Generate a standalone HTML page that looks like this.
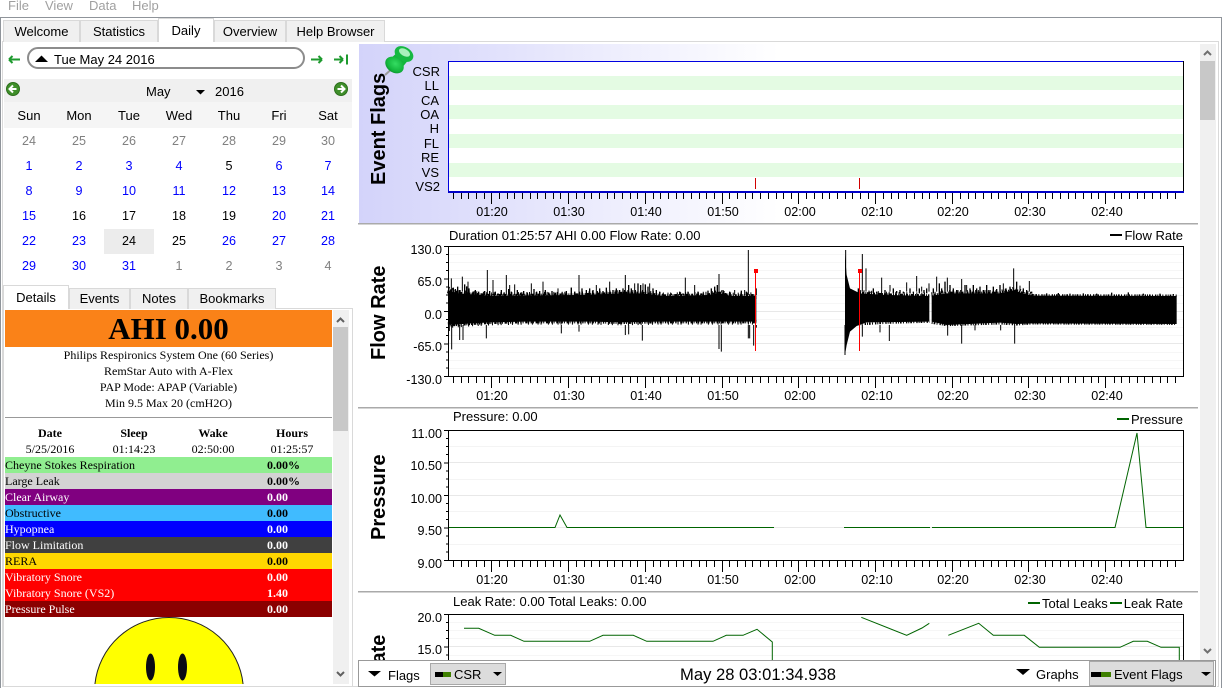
<!DOCTYPE html>
<html><head><meta charset="utf-8">
<style>
html,body{margin:0;padding:0;background:#fff;width:1224px;height:688px;overflow:hidden}
body{position:relative;font:13px "Liberation Sans",Arial,sans-serif;color:#000}
.a{position:absolute;white-space:nowrap}
.tab{position:absolute;box-sizing:border-box;background:#f0f0f0;border:1px solid #d9d9d9;border-bottom:0;text-align:center;color:#000}
.on{background:#fff}
.d{position:absolute;width:50px;text-align:center;height:15px;line-height:15px;color:#00f;font-size:12.6px}
.w{font-size:13px}
.g{color:#808080}.k{color:#000}
.r{position:absolute;left:5px;width:327px;height:16px;font:12px/16px "Liberation Serif",serif;white-space:nowrap}
.r b{position:absolute;left:262px;top:0}
.c{position:absolute;left:5px;width:327px;text-align:center;font:12px/16px "Liberation Serif",serif}
.h{position:absolute;width:80px;text-align:center;font:12px/16px "Liberation Serif",serif}
svg{font:13px "Liberation Sans",Arial,sans-serif}
</style></head><body>

<!-- menu -->
<div class="a" style="left:8px;top:-2px;color:#a0a0a0;line-height:16px">File</div>
<div class="a" style="left:45px;top:-2px;color:#a0a0a0;line-height:16px">View</div>
<div class="a" style="left:89px;top:-2px;color:#a0a0a0;line-height:16px">Data</div>
<div class="a" style="left:132px;top:-2px;color:#a0a0a0;line-height:16px">Help</div>
<div class="a" style="left:0;top:17px;width:1222px;height:1px;background:#8f949a"></div>
<div class="a" style="left:0;top:17px;width:1px;height:671px;background:#8f949a"></div>
<div class="a" style="left:1221px;top:17px;width:1px;height:671px;background:#8f949a"></div>

<!-- main tabs -->
<div class="a" style="left:2px;top:41px;width:1215px;height:644px;border:1px solid #d9d9d9"></div>
<div class="tab" style="left:3px;top:20px;width:77px;height:22px;line-height:22px">Welcome</div>
<div class="tab" style="left:80px;top:20px;width:78px;height:22px;line-height:22px">Statistics</div>
<div class="tab" style="left:214px;top:20px;width:72px;height:22px;line-height:22px">Overview</div>
<div class="tab" style="left:286px;top:20px;width:99px;height:22px;line-height:22px">Help Browser</div>
<div class="tab on" style="left:158px;top:18px;width:56px;height:24px;line-height:23px">Daily</div>

<!-- date bar -->
<div class="a" style="left:27px;top:47px;width:274px;height:18px;border:2px solid #8c8c8c;border-radius:11px"></div>
<div class="a" style="left:54px;top:52px;line-height:15px">Tue May 24 2016</div>

<!-- calendar -->
<div class="a" style="left:4px;top:79px;width:348px;height:23px;background:#f0f0f0"></div>
<div class="a" style="left:4px;top:102px;width:348px;height:26px;background:#f5f5f5"></div>
<div class="a" style="left:146px;top:84px;line-height:15px">May</div>
<div class="a" style="left:215px;top:84px;line-height:15px">2016</div>
<div class="d k w" style="left:4px;top:108px">Sun</div><div class="d k w" style="left:54px;top:108px">Mon</div><div class="d k w" style="left:104px;top:108px">Tue</div><div class="d k w" style="left:154px;top:108px">Wed</div><div class="d k w" style="left:204px;top:108px">Thu</div><div class="d k w" style="left:254px;top:108px">Fri</div><div class="d k w" style="left:303px;top:108px">Sat</div>
<div class="a" style="left:104px;top:229px;width:50px;height:25px;background:#ececec"></div>

<div class="d g" style="left:4px;top:134px">24</div><div class="d g" style="left:54px;top:134px">25</div><div class="d g" style="left:104px;top:134px">26</div><div class="d g" style="left:154px;top:134px">27</div><div class="d g" style="left:204px;top:134px">28</div><div class="d g" style="left:254px;top:134px">29</div><div class="d g" style="left:303px;top:134px">30</div>
<div class="d" style="left:4px;top:159px">1</div><div class="d" style="left:54px;top:159px">2</div><div class="d" style="left:104px;top:159px">3</div><div class="d" style="left:154px;top:159px">4</div><div class="d k" style="left:204px;top:159px">5</div><div class="d" style="left:254px;top:159px">6</div><div class="d" style="left:303px;top:159px">7</div>
<div class="d" style="left:4px;top:184px">8</div><div class="d" style="left:54px;top:184px">9</div><div class="d" style="left:104px;top:184px">10</div><div class="d" style="left:154px;top:184px">11</div><div class="d" style="left:204px;top:184px">12</div><div class="d" style="left:254px;top:184px">13</div><div class="d" style="left:303px;top:184px">14</div>
<div class="d" style="left:4px;top:209px">15</div><div class="d k" style="left:54px;top:209px">16</div><div class="d k" style="left:104px;top:209px">17</div><div class="d k" style="left:154px;top:209px">18</div><div class="d k" style="left:204px;top:209px">19</div><div class="d" style="left:254px;top:209px">20</div><div class="d" style="left:303px;top:209px">21</div>
<div class="d" style="left:4px;top:234px">22</div><div class="d" style="left:54px;top:234px">23</div><div class="d k" style="left:104px;top:234px">24</div><div class="d k" style="left:154px;top:234px">25</div><div class="d" style="left:204px;top:234px">26</div><div class="d" style="left:254px;top:234px">27</div><div class="d" style="left:303px;top:234px">28</div>
<div class="d" style="left:4px;top:259px">29</div><div class="d" style="left:54px;top:259px">30</div><div class="d" style="left:104px;top:259px">31</div><div class="d g" style="left:154px;top:259px">1</div><div class="d g" style="left:204px;top:259px">2</div><div class="d g" style="left:254px;top:259px">3</div><div class="d g" style="left:303px;top:259px">4</div>

<!-- left lower pane -->
<div class="a" style="left:3px;top:308px;width:348px;height:377px;border:1px solid #d9d9d9"></div>
<div class="tab" style="left:69px;top:288px;width:61px;height:21px;line-height:20px">Events</div>
<div class="tab" style="left:130px;top:288px;width:58px;height:21px;line-height:20px">Notes</div>
<div class="tab" style="left:188px;top:288px;width:88px;height:21px;line-height:20px">Bookmarks</div>
<div class="tab on" style="left:3px;top:285px;width:66px;height:24px;line-height:23px">Details</div>

<div class="a" style="left:5px;top:310px;width:327px;height:37px;background:#fa8218;text-align:center;font:bold 31px/37px 'Liberation Serif',serif">AHI 0.00</div>
<div class="c" style="top:347px">Philips Respironics System One (60 Series)</div>
<div class="c" style="top:363px">RemStar Auto with A-Flex</div>
<div class="c" style="top:379px">PAP Mode: APAP (Variable)</div>
<div class="c" style="top:395px">Min 9.5 Max 20 (cmH2O)</div>
<div class="a" style="left:5px;top:417px;width:327px;height:1px;background:#999"></div>
<div class="h" style="left:10px;top:425px;font-weight:bold">Date</div>
<div class="h" style="left:94px;top:425px;font-weight:bold">Sleep</div>
<div class="h" style="left:173px;top:425px;font-weight:bold">Wake</div>
<div class="h" style="left:252px;top:425px;font-weight:bold">Hours</div>
<div class="h" style="left:10px;top:441px">5/25/2016</div>
<div class="h" style="left:94px;top:441px">01:14:23</div>
<div class="h" style="left:173px;top:441px">02:50:00</div>
<div class="h" style="left:252px;top:441px">01:25:57</div>

<div class="r" style="top:457px;background:#90ee90">Cheyne Stokes Respiration<b>0.00%</b></div>
<div class="r" style="top:473px;background:#d3d3d3">Large Leak<b>0.00%</b></div>
<div class="r" style="top:489px;background:#800080;color:#fff">Clear Airway<b>0.00</b></div>
<div class="r" style="top:505px;background:#40bbff">Obstructive<b>0.00</b></div>
<div class="r" style="top:521px;background:#0000ff;color:#fff">Hypopnea<b>0.00</b></div>
<div class="r" style="top:537px;background:#404040;color:#fff">Flow Limitation<b>0.00</b></div>
<div class="r" style="top:553px;background:#ffd700">RERA<b>0.00</b></div>
<div class="r" style="top:569px;background:#ff0000;color:#fff">Vibratory Snore<b>0.00</b></div>
<div class="r" style="top:585px;background:#ff0000;color:#fff">Vibratory Snore (VS2)<b>1.40</b></div>
<div class="r" style="top:601px;background:#8b0000;color:#fff">Pressure Pulse<b>0.00</b></div>

<!-- graphics layer -->
<svg class="a" style="left:0;top:0" width="1224" height="688" viewBox="0 0 1224 688">
<defs>
<linearGradient id="gr" x1="0" x2="1" y1="0" y2="0"><stop offset="0" stop-color="#d3d3fa"/><stop offset="1" stop-color="#fff"/></linearGradient>
<radialGradient id="pn" cx=".5" cy=".4" r=".65"><stop offset="0" stop-color="#35dc62"/><stop offset=".7" stop-color="#12b53c"/><stop offset="1" stop-color="#0a8a2c"/></radialGradient>
<g id="xt" fill="none" stroke="#000">
<path d="M453.5 0v6M461.5 0v6M468.5 0v6M476.5 0v6M484.5 0v6M499.5 0v6M507.5 0v6M514.5 0v6M522.5 0v6M530.5 0v6M537.5 0v6M545.5 0v6M553.5 0v6M560.5 0v6M576.5 0v6M584.5 0v6M591.5 0v6M599.5 0v6M607.5 0v6M614.5 0v6M622.5 0v6M630.5 0v6M637.5 0v6M653.5 0v6M660.5 0v6M668.5 0v6M676.5 0v6M683.5 0v6M691.5 0v6M699.5 0v6M706.5 0v6M714.5 0v6M729.5 0v6M737.5 0v6M745.5 0v6M752.5 0v6M760.5 0v6M768.5 0v6M776.5 0v6M783.5 0v6M791.5 0v6M806.5 0v6M814.5 0v6M822.5 0v6M829.5 0v6M837.5 0v6M845.5 0v6M852.5 0v6M860.5 0v6M868.5 0v6M883.5 0v6M891.5 0v6M898.5 0v6M906.5 0v6M914.5 0v6M922.5 0v6M929.5 0v6M937.5 0v6M945.5 0v6M960.5 0v6M968.5 0v6M975.5 0v6M983.5 0v6M991.5 0v6M998.5 0v6M1006.5 0v6M1014.5 0v6M1021.5 0v6M1037.5 0v6M1045.5 0v6M1052.5 0v6M1060.5 0v6M1068.5 0v6M1075.5 0v6M1083.5 0v6M1091.5 0v6M1098.5 0v6M1114.5 0v6M1121.5 0v6M1129.5 0v6M1137.5 0v6M1144.5 0v6M1152.5 0v6M1160.5 0v6M1167.5 0v6M1175.5 0v6"/>
<path d="M491.5 0v11M568.5 0v11M645.5 0v11M722.5 0v11M798.5 0v11M875.5 0v11M952.5 0v11M1028.5 0v11M1105.5 0v11"/>
</g>
<g id="yt" fill="none" stroke="#000">
<path d="M444 .5h4M444 33h4M444 65.5h4M444 98h4M444 130.5h4"/>
<path d="M446 8.5h2M446 16.5h2M446 24.5h2M446 41h2M446 49h2M446 57h2M446 73.500h2M446 81.500h2M446 89.500h2M446 106h2M446 114h2M446 122h2"/>
</g>
<g id="gl" fill="none">
<path stroke="#f6f6f6" d="M449 8.500H1183M449 16.500H1183M449 24.500H1183M449 41.500H1183M449 49.500H1183M449 57.500H1183M449 73.500H1183M449 81.500H1183M449 89.500H1183M449 106.500H1183M449 114.500H1183M449 122.500H1183"/>
<path stroke="#e8e8e8" d="M449 32.500H1183M449 65.500H1183M449 97.500H1183"/>
</g>
<g id="gp" fill="none">
<path stroke="#f4f4f4" d="M449 16.500H1183M449 49.500H1183M449 81.500H1183M449 114.500H1183"/>
<path stroke="#e8e8e8" d="M449 32.500H1183M449 65.500H1183M449 97.500H1183"/>
</g>
<g id="xl" text-anchor="middle" font-size="12.6">
<text x="492" y="0">01:20</text><text x="569" y="0">01:30</text><text x="646" y="0">01:40</text><text x="723" y="0">01:50</text><text x="800" y="0">02:00</text><text x="877" y="0">02:10</text><text x="953" y="0">02:20</text><text x="1030" y="0">02:30</text><text x="1107" y="0">02:40</text>
</g>
</defs>

<!-- date arrows -->
<g fill="none" stroke="#1e9a2e" stroke-width="2">
<path d="M9 59.500H20M9 59.500l3.500-3.500M9 59.500l3.500 3.500"/>
<path d="M311 59.500H322M322 59.500l-3.500-3.500M322 59.500l-3.500 3.500"/>
<path d="M334 59.500H343M343 59.500l-3.500-3.500M343 59.500l-3.500 3.500M347 54.500v10"/>
</g>
<path d="M35 62l6.500-6.500L48 62z" fill="#000"/>
<!-- month nav -->
<circle cx="13" cy="89" r="6.500" fill="#3f8f2a" stroke="#2c6e1c"/>
<path d="M16.500 89H10M13 85.500L9.500 89l3.500 3.500" fill="none" stroke="#fff" stroke-width="2"/>
<circle cx="341" cy="89" r="6.500" fill="#3f8f2a" stroke="#2c6e1c"/>
<path d="M337.500 89H344M341 85.500L344.500 89l-3.500 3.500" fill="none" stroke="#fff" stroke-width="2"/>
<path d="M196 90h9l-4.500 4.500z" fill="#000"/>

<!-- left scrollbar -->
<rect x="333" y="310" width="16" height="374" fill="#f0f0f0"/>
<rect x="333" y="327" width="15" height="104" fill="#c8c8c8"/>
<path d="M337 322l3.500-3.500 3.500 3.500M337 672l3.500 3.500 3.500-3.500" fill="none" stroke="#606060" stroke-width="2"/>
<!-- smiley -->
<path d="M94.930 684A74.500 74.500 0 0 1 243.070 684Z" fill="#ff0"/>
<path d="M94.930 684A74.500 74.500 0 0 1 243.070 684" fill="none" stroke="#222"/>
<ellipse cx="150.500" cy="667" rx="4.500" ry="13.500" fill="#0a0a14"/>
<ellipse cx="182.500" cy="667" rx="4.500" ry="13.500" fill="#0a0a14"/>

<!-- right area -->
<rect x="358" y="43" width="842" height="617" fill="#fff"/>
<rect x="359" y="44" width="420" height="179" fill="url(#gr)"/>
<rect x="358" y="223" width="840" height="1.500" fill="#aaa"/>
<rect x="358" y="407" width="840" height="1.500" fill="#aaa"/>
<rect x="358" y="591" width="840" height="1.500" fill="#aaa"/>

<!-- Event flags -->
<rect x="448" y="61" width="735" height="130" fill="#fff"/>
<g fill="#e4fbe3"><rect x="449" y="76" width="734" height="14"/><rect x="449" y="105" width="734" height="14"/><rect x="449" y="134" width="734" height="14"/><rect x="449" y="163" width="734" height="14"/></g>
<path d="M448.500 191V61.500H1183" fill="none" stroke="#0000e0"/>
<path d="M1183.500 61V191" fill="none" stroke="#000"/>
<rect x="448" y="191" width="736" height="2" fill="#0000c8"/>
<use href="#xt" y="193"/>
<use href="#xl" y="216"/>
<path d="M755.500 178v11M859.500 178v11" stroke="#d00000" fill="none"/>
<g text-anchor="end">
<text x="440" y="76">CSR</text><text x="439" y="90">LL</text><text x="439" y="105">CA</text><text x="439" y="119">OA</text><text x="439" y="133">H</text><text x="439" y="148">FL</text><text x="439" y="162">RE</text><text x="439" y="177">VS</text><text x="440" y="191">VS2</text>
</g>
<text transform="translate(385,185) rotate(-90)" font-size="20" font-weight="bold">Event Flags</text>
<!-- pin -->
<path d="M394 67L385 75" stroke="#9a9a9a" stroke-width="2"/>
<path d="M400 50L410 58 401 69 389 60z" fill="#12b53c"/>
<ellipse cx="394.500" cy="65" rx="10" ry="7.500" transform="rotate(35 394.500 65)" fill="url(#pn)"/>
<ellipse cx="404" cy="54" rx="10" ry="7" transform="rotate(30 404 54)" fill="#16b842"/>
<ellipse cx="404.500" cy="52.500" rx="6" ry="3.500" transform="rotate(30 404.500 52.500)" fill="#a8f0bb"/>

<!-- Flow Rate -->
<text x="449" y="240">Duration 01:25:57 AHI 0.00 Flow Rate: 0.00</text>
<rect x="1110" y="234" width="12" height="2" fill="#000"/>
<text x="1183" y="240" text-anchor="end">Flow Rate</text>
<text transform="translate(385,360) rotate(-90)" font-size="20" font-weight="bold">Flow Rate</text>
<use href="#gl" y="246"/>
<g transform="translate(358,225) scale(.33333)">
<path fill="#000" d="M270 195L300 205 400 212 660 210 800 205 850 205 920 213 1050 210 1085 205 1120 213 1195 212V290L1100 290 1000 290 900 290 800 292 700 290 600 290 500 290 400 292 340 295 300 298 270 300z"/>
<g fill="none" stroke="#000">
<path stroke-width="10" stroke-dasharray="3 3 6 4 3 2 9 3" d="M270 195L300 205 400 212 660 210 800 205 850 205 920 213 1050 210 1085 205 1120 213 1195 212"/>
<path stroke-width="20" stroke-dasharray="3 7 3 12 3 5 3 17" d="M270 195L300 205 400 212 660 210 800 205 850 205 920 213 1050 210 1085 205 1120 213 1195 212"/>
<path stroke-width="10" stroke-dasharray="4 3 3 5 7 2 3 4" d="M270 300L340 295 400 292 500 290 700 290 800 292 900 290 1195 290"/>
<path stroke-width="18" stroke-dasharray="3 9 3 14 3 6 3 19" d="M270 300L340 295 400 292 500 290 700 290 800 292 900 290 1195 290"/>
<path stroke-width="3" d="M388 210V135M445 210V150M663 210V150M802 210V150M982 210V158M1083 210V147M1171 210V75M280 200V160M313 200V155M405 210V165M470 210V178M520 210V175M555 210V170M715 210V180M755 210V170M830 210V175M855 210V175M875 210V175M1010 210V180M1130 210V195M1160 210V195M1195 210V190M330 210V170M455 210V180M640 210V188M600 210V190M281 300V373M274 300V318M305 300V345M315 300V345M385 300V340M610 300V325M663 300V320M802 300V330M812 300V328M853 300V347M1083 300V372M1090 300V380M1171 300V340M1175 300V340M1187 300V362M1195 300V308"/>
<path stroke-width="4" d="M272 210V185M278 210V195M286 210V188M292 210V192M299 210V185M306 210V195M320 210V178M326 210V184M333 210V190M345 210V200M352 210V195M362 210V200M372 210V205M380 210V198M395 210V198M412 210V200M420 210V205M430 210V195M438 210V203M452 210V192M460 210V200M478 210V195M488 210V203M497 210V198M508 210V203M528 210V192M536 210V200M545 210V198M562 210V195M572 210V202M582 210V198M592 210V203M612 210V203M625 210V198M640 210V188M650 210V200M672 210V190M685 210V195M695 210V190M705 210V195M725 210V190M735 210V198M745 210V188M765 210V195M775 210V190M785 210V195M795 210V190M812 210V180M820 210V190M840 210V175M848 210V180M862 210V178M870 210V185M885 210V190M895 210V195M905 210V200M915 210V205M940 210V205M965 210V200M975 210V205M990 210V200M1020 210V200M1030 210V205M1050 210V197M1060 210V190M1070 210V185M1078 210V180M1095 210V195M1105 210V205M1115 210V200M1150 210V197M1165 210V200"/>
</g>
</g>
<g transform="translate(700,225) scale(.33333)">
<path fill="#000" d="M435 90L440 150 450 190 480 205 560 210 688 213V290L500 292 470 303 450 320 440 360 435 390z"/>
<path fill="#000" d="M695 212L740 205 900 205 945 195 965 205 1000 212 1430 213V297L1000 295 950 297 900 293 740 300 695 290z"/>
<g fill="none" stroke="#000">
<path stroke-width="10" stroke-dasharray="3 3 6 4 3 2 9 3" d="M480 205L560 210 688 213M695 212L740 205 900 205 945 195 965 205 1000 212"/>
<path stroke-width="20" stroke-dasharray="3 7 3 12 3 5 3 17" d="M480 205L560 210 688 213M695 212L740 205 900 205 945 195 965 205 1000 212"/>
<path stroke-width="7" stroke-dasharray="3 3 5 4 3 6 4 3" d="M1000 211L1430 212M470 298L560 293 688 290M695 293L740 300 900 295 950 298 1000 295 1430 296"/>
<path stroke-width="3" d="M437 200V75M487 200V87M498 200V130M545 200V158M650 200V153M710 200V155M742 200V158M785 200V162M941 200V130M988 200V168M570 200V180M620 200V172M665 200V185M687 200V175M800 200V180M910 200V175M960 200V182M435 300V390M487 300V335M568 300V348M540 300V322M743 300V332M785 300V356M944 300V356M825 300V316M902 300V316"/>
<path stroke-width="4" d="M475 205V190M510 205V200M520 205V190M530 205V200M555 205V195M580 205V190M590 205V198M600 205V195M610 205V200M630 205V190M640 205V200M658 205V190M672 205V195M680 205V190M700 205V190M718 205V175M725 205V190M735 205V170M750 205V180M760 205V190M770 205V195M795 205V180M810 205V190M820 205V180M830 205V190M840 205V185M850 205V195M860 205V180M870 205V195M880 205V185M890 205V192M900 205V180M918 205V190M930 205V185M950 205V170M970 205V190M980 205V195M995 205V200M1040 212V205M1075 212V204M1110 212V206M1150 212V205M1190 212V206M1235 212V203M1285 212V202M1330 212V206M1380 212V206M1420 212V207"/>
</g>
</g>
<path d="M755.500 271V351M859.500 271V351" stroke="#f00" fill="none"/>
<rect x="754" y="269" width="4" height="4" fill="#f00"/>
<rect x="858" y="269" width="4" height="4" fill="#f00"/>
<rect x="448.500" y="246.500" width="735" height="130" fill="none" stroke="#000"/>
<use href="#yt" y="246"/>
<use href="#xt" y="377"/>
<use href="#xl" y="400"/>
<g text-anchor="end" font-size="12.6"><text x="442" y="254">130.0</text><text x="442" y="286">65.0</text><text x="442" y="319">0.0</text><text x="442" y="351">-65.0</text><text x="442" y="384">-130.0</text></g>

<!-- Pressure -->
<text x="453" y="421">Pressure: 0.00</text>
<rect x="1117" y="418" width="12" height="2" fill="#006400"/>
<text x="1183" y="424" text-anchor="end">Pressure</text>
<text transform="translate(385,540) rotate(-90)" font-size="20" font-weight="bold">Pressure</text>
<use href="#gp" y="430"/>
<path d="M449 527.500H555L560 515 567 527.500H774M844 527.500H930M932 527.500H1115L1137 433 1146 527.500H1183" fill="none" stroke="#006400"/>
<rect x="448.500" y="430.500" width="735" height="130" fill="none" stroke="#000"/>
<use href="#yt" y="430"/>
<use href="#xt" y="561"/>
<use href="#xl" y="584"/>
<g text-anchor="end" font-size="12.6"><text x="442" y="438">11.00</text><text x="442" y="470">10.50</text><text x="442" y="503">10.00</text><text x="442" y="535">9.50</text><text x="442" y="568">9.00</text></g>

<!-- Leak -->
<text x="453" y="606">Leak Rate: 0.00 Total Leaks: 0.00</text>
<rect x="1028" y="602" width="12" height="2" fill="#006400"/>
<rect x="1110" y="602" width="12" height="2" fill="#006400"/>
<text x="1042" y="608">Total Leaks</text>
<text x="1183" y="608" text-anchor="end">Leak Rate</text>
<path fill="none" stroke="#f6f6f6" d="M449 622.500H1183M449 630.500H1183M449 638.500H1183M449 655.500H1183"/>
<path fill="none" stroke="#e8e8e8" d="M449 646.500H1183"/>
<rect x="448" y="614" width="1" height="46" fill="#000"/>
<rect x="1183" y="614" width="1" height="46" fill="#000"/>
<rect x="448" y="614" width="736" height="1" fill="#000"/>
<path fill="none" stroke="#000" d="M444 614.500h4M444 647h4M446 622.500h2M446 630.500h2M446 638.500h2M446 655h2"/>
<path fill="none" stroke="#006400" d="M464 628.300H478.700L494.700 635.300H510.700L524 641.300H589.700L603 635.300H633.300L646.700 641.300H713L726.300 635.300H743L757 629.300 772.300 642V660M861.300 617.300L906.700 635.300 922 628 929.300 623.300M948.300 635.300L978.700 623.300 993.300 635.300H1024.300L1039.300 647.300H1120L1133.300 641.300H1147.300L1161 647.300H1179.300V660"/>
<g text-anchor="end" font-size="12.6"><text x="442" y="622">20.0</text><text x="442" y="654">15.0</text></g>
<text transform="translate(385,678) rotate(-90)" font-size="20" font-weight="bold">Rate</text>

<!-- bottom bar -->
<rect x="358" y="660" width="859" height="28" fill="#fff"/>
<rect x="358.500" y="660.500" width="857" height="26" fill="none" stroke="#999"/>
<path d="M368 671h13l-6.500 5.500z" fill="#000"/>
<text x="388" y="680">Flags</text>
<rect x="430.500" y="663.500" width="75" height="21" fill="#dcdcdc" stroke="#a8a8a8"/>
<rect x="435" y="672" width="8" height="5" fill="#000"/><rect x="443" y="672" width="8" height="5" fill="#3f8000"/>
<text x="454" y="679">CSR</text>
<path d="M493 672h9l-4.500 4z" fill="#000"/>
<text x="758" y="680" text-anchor="middle" font-size="16.6">May 28 03:01:34.938</text>
<path d="M1016 669h14l-7 6z" fill="#000"/>
<text x="1036" y="679">Graphs</text>
<rect x="1089.500" y="661.500" width="124" height="24" fill="#dcdcdc" stroke="#a8a8a8"/>
<rect x="1091" y="672" width="10" height="5" fill="#000"/><rect x="1101" y="672" width="10" height="5" fill="#3f8000"/>
<text x="1114" y="679">Event Flags</text>
<path d="M1201 672h10l-5 4z" fill="#000"/>

<!-- right scrollbar -->
<rect x="1200" y="44" width="16" height="616" fill="#f0f0f0"/>
<rect x="1200" y="61" width="15" height="59" fill="#c8c8c8"/>
<path d="M1204 55l3.500-3.500 3.500 3.500M1204 649l3.500 3.500 3.500-3.500" fill="none" stroke="#707070" stroke-width="2"/>
</svg>
</body></html>
